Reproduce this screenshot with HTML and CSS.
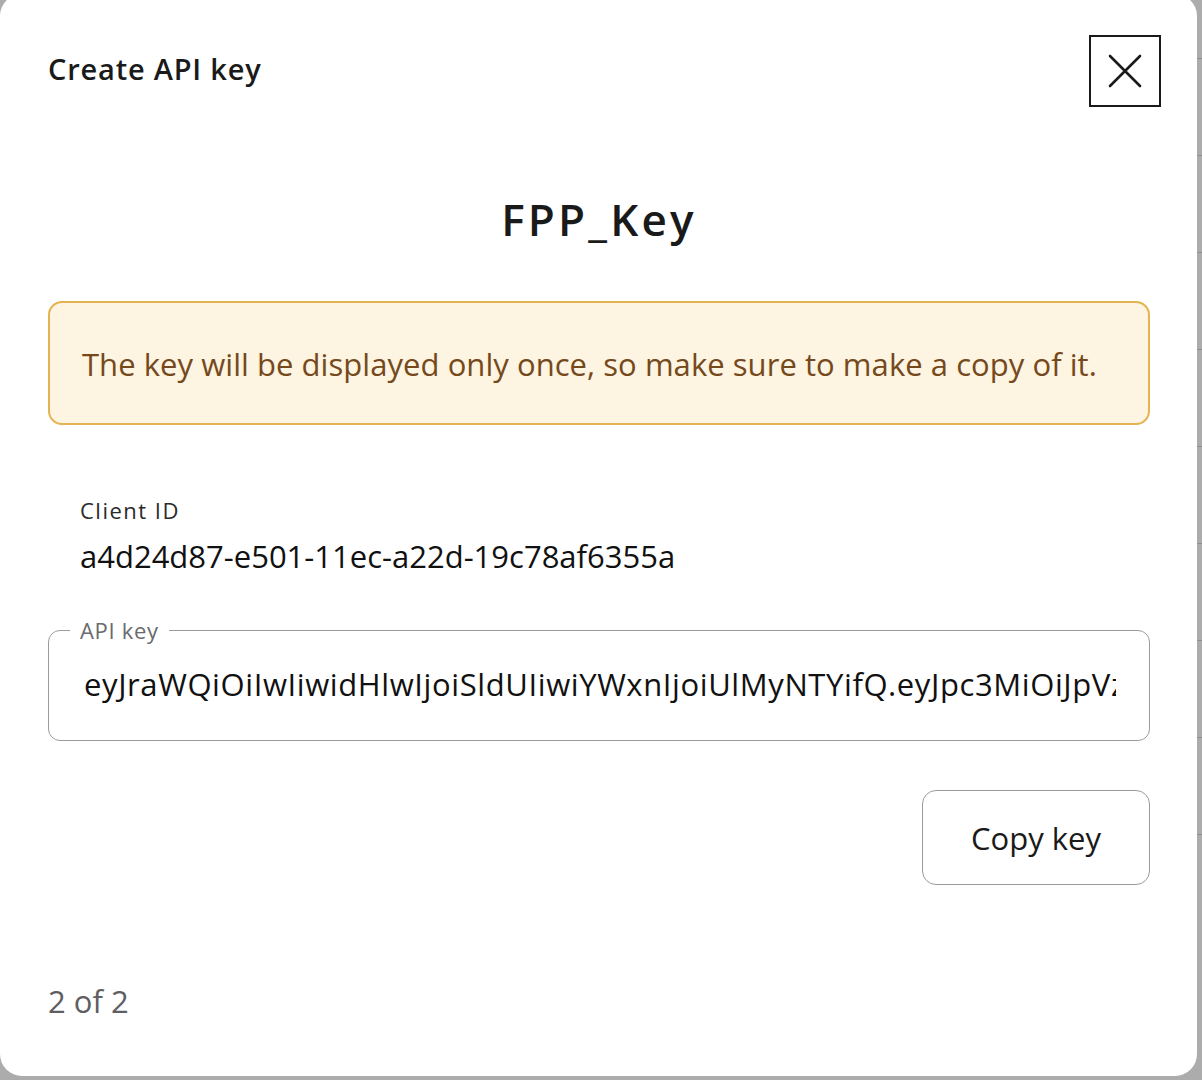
FILE: index.html
```html
<!DOCTYPE html>
<html lang="en">
<head>
<meta charset="utf-8">
<title>Create API key</title>
<link rel="stylesheet" href="styles.css">
</head>
<body>
<div class="page">
  <div class="page-rows">
    <div class="row-line"></div><div class="row-line"></div><div class="row-line"></div><div class="row-line"></div><div class="row-line"></div><div class="row-line"></div><div class="row-line"></div><div class="row-line"></div><div class="row-line"></div>
  </div>
  <p class="page-text">Graphic Authority. The root certificate of every organization is different from the others</p>
</div>

<div class="modal" role="dialog" aria-labelledby="modal-title">
  <header class="modal-header">
    <h2 class="modal-title" id="modal-title">Create API key</h2>
    <button class="close-btn" aria-label="Close">
      <svg width="34" height="34" viewBox="0 0 34 34" aria-hidden="true">
        <path d="M2 2 L32 32 M32 2 L2 32" stroke="#1a1a1a" stroke-width="2.6" stroke-linecap="round" fill="none"/>
      </svg>
    </button>
  </header>

  <div class="modal-body">
    <h1 class="key-name">FPP_Key</h1>

    <div class="notice">The key will be displayed only once, so make sure to make a copy of it.</div>

    <div class="client">
      <div class="client-label">Client ID</div>
      <div class="client-value">a4d24d87-e501-11ec-a22d-19c78af6355a</div>
    </div>

    <fieldset class="key-field">
      <legend class="key-legend">API key</legend>
      <div class="key-value">eyJraWQiOiIwIiwidHlwIjoiSldUIiwiYWxnIjoiUlMyNTYifQ.eyJpc3MiOiJpVzJhZGhJd2lDNE1jQXZtRjNmUjFnIiwic3ViIjoiYTRkMjRkODctZTUwMS0xMWVjLWEyMmQtMTljNzhhZjYzNTVhIn0</div>
    </fieldset>

    <div class="actions">
      <button class="copy-btn">Copy key</button>
    </div>
  </div>

  <footer class="modal-footer">2 of 2</footer>
</div>
</body>
</html>
```

FILE: styles.css
```css
* { box-sizing: border-box; }

html, body {
  margin: 0;
  padding: 0;
}

body {
  width: 1202px;
  height: 1080px;
  overflow: hidden;
  background: #acacac;
  font-family: "Open Sans", "Noto Sans", sans-serif;
  color: #1a1a1a;
  position: relative;
}

.page {
  height: 1080px;
  display: flex;
  flex-direction: column;
  justify-content: space-between;
  overflow: hidden;
}

.page-rows {
  display: flex;
  flex-direction: column;
  gap: 96px;
  padding-top: 58px;
  align-items: flex-end;
}

.row-line {
  width: 6px;
  height: 1px;
  background: #8e8e8e;
}

.page-text {
  margin: 0 0 -30px 105px;
  width: 1097px;
  overflow: hidden;
  font-size: 30px;
  line-height: 34px;
  color: #2a2a2a;
  white-space: nowrap;
}

.modal {
  position: absolute;
  left: 0;
  top: -6px;
  width: 1197px;
  height: 1082px;
  background: #ffffff;
  border-radius: 22px;
  display: flex;
  flex-direction: column;
  padding: 0 47px 0 48px;
}

.modal-header {
  display: flex;
  justify-content: space-between;
  align-items: center;
  padding-top: 41px;
  margin-right: -11px;
}

.modal-title {
  margin: 0;
  font-size: 29px;
  line-height: 36px;
  font-weight: 600;
  letter-spacing: 0.8px;
  color: #1a1a1a;
  padding-bottom: 4px;
}

.close-btn {
  width: 72px;
  height: 72px;
  border: 2px solid #1a1a1a;
  background: #fff;
  padding: 0;
  display: flex;
  align-items: center;
  justify-content: center;
  cursor: pointer;
}

.modal-body {
  display: flex;
  flex-direction: column;
}

.key-name {
  margin: 82px 0 0;
  text-align: center;
  font-size: 44px;
  line-height: 60px;
  font-weight: 600;
  letter-spacing: 3.2px;
  color: #1a1a1a;
}

.notice {
  margin-top: 52px;
  height: 124px;
  display: flex;
  align-items: center;
  padding: 2px 32px 0;
  background: #fdf4e1;
  border: 2px solid #e4b452;
  border-radius: 14px;
  color: #75491c;
  font-size: 31px;
  letter-spacing: 0.05px;
}

.client {
  margin-top: 72px;
  padding-left: 32px;
  display: flex;
  flex-direction: column;
  gap: 14px;
}

.client-label {
  font-size: 22px;
  line-height: 26px;
  color: #2a2a2a;
  letter-spacing: 1.5px;
}

.client-value {
  font-size: 31px;
  line-height: 38px;
  color: #111;
}

.key-field {
  margin: 44px 0 0;
  padding: 0 33px 0 35px;
  height: 122px;
  border: 1.5px solid #9b9b9f;
  border-radius: 12px;
  min-width: 0;
}

.key-legend {
  margin-left: -14px;
  padding: 0 10px;
  font-size: 22px;
  line-height: 22px;
  color: #6a6a6e;
  letter-spacing: 0.7px;
}

.key-value {
  width: 100%;
  overflow: hidden;
  white-space: nowrap;
  font-size: 31px;
  line-height: 38px;
  letter-spacing: 0.6px;
  color: #111;
  margin-top: 24px;
}

.actions {
  display: flex;
  justify-content: flex-end;
  margin-top: 49px;
}

.copy-btn {
  width: 228px;
  height: 95px;
  border: 1.5px solid #9b9b9f;
  border-radius: 14px;
  background: #fff;
  font-family: inherit;
  font-size: 31px;
  color: #1a1a1a;
  cursor: pointer;
}

.modal-footer {
  margin-top: auto;
  padding-bottom: 56px;
  font-size: 31px;
  line-height: 38px;
  color: #5e5e63;
}
```
